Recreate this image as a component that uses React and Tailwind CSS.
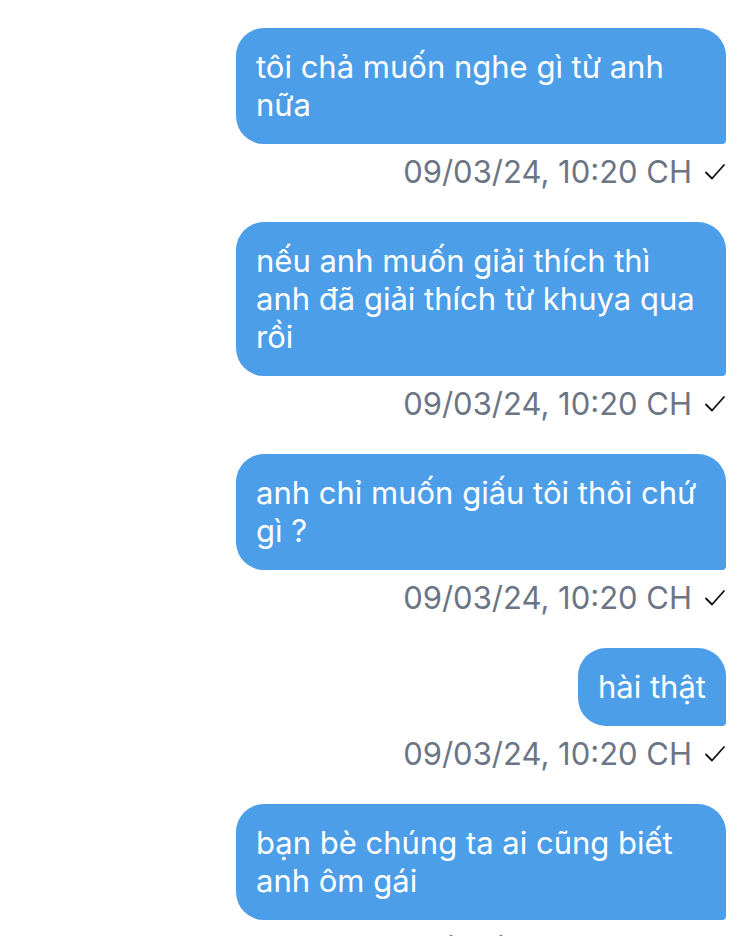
import React from 'react';

const messages = [
	'tôi chả muốn nghe gì từ anh nữa',
	'nếu anh muốn giải thích thì anh đã giải thích từ khuya qua rồi',
	'anh chỉ muốn giấu tôi thôi chứ gì ?',
	'hài thật',
	'bạn bè chúng ta ai cũng biết anh ôm gái',
];

function Check() {
	return (
		<svg width="22" height="20" viewBox="0 0 22 20" fill="none">
			<path d="M2 10.5 L8 16.5 L20 3" stroke="#111" strokeWidth="1.8" strokeLinecap="round" strokeLinejoin="round" />
		</svg>
	);
}

function Message({ text }) {
	return (
		<div className="flex flex-col items-end">
			<div className="max-w-[490px] w-fit bg-[#4d9ee8] text-white px-5 py-5 text-[31px] leading-[38px] rounded-tl-[28px] rounded-tr-[28px] rounded-bl-[28px] rounded-br-[4px]">
				{text}
			</div>
			<div className="mt-[10px] flex items-center gap-3 text-[31px] leading-[36px] text-[#6b7585]">
				<span>09/03/24, 10:20 CH</span>
				<Check />
			</div>
		</div>
	);
}

export default function App() {
	return (
		<div
			className="w-full min-h-screen bg-white pt-[28px] pr-[24px] flex flex-col gap-8"
			style={{ fontFamily: 'Inter, "Noto Sans", sans-serif' }}
		>
			{messages.map((m) => (
				<Message key={m} text={m} />
			))}
		</div>
	);
}
